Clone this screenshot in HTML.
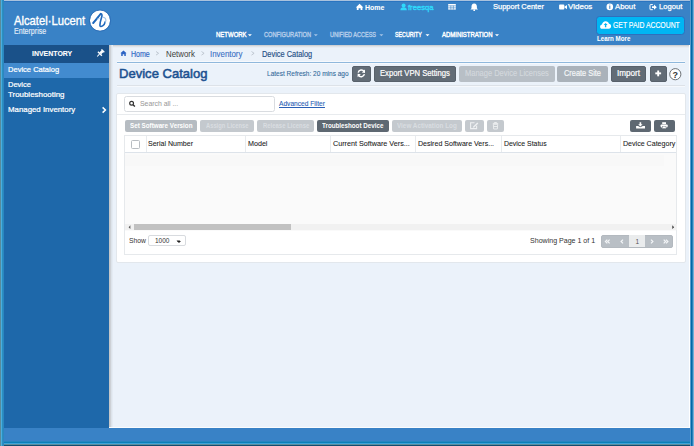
<!DOCTYPE html>
<html><head><meta charset="utf-8">
<style>
*{margin:0;padding:0;box-sizing:border-box}
html,body{width:694px;height:446px;overflow:hidden;background:#3982c6;font-family:"Liberation Sans",sans-serif}
.a{position:absolute}
.t{position:absolute;white-space:nowrap;transform-origin:0 0;font-family:"Liberation Sans",sans-serif}
</style></head><body>
<!-- header -->
<div class="a" style="left:0;top:0;width:694px;height:45px;background:#3982c6"></div>
<!-- sidebar -->
<div class="a" style="left:4px;top:45px;width:105px;height:383px;background:#1e68aa"></div>
<div class="a" style="left:4px;top:45px;width:105px;height:18px;background:#1a5189"></div>
<div class="a" style="left:4px;top:63px;width:105px;height:15px;background:#428bcf"></div>
<!-- content -->
<div class="a" style="left:109px;top:45px;width:581px;height:383px;background:#ebf2fa"></div>
<div class="a" style="left:109px;top:45px;width:581px;height:1px;background:#cfd1d4"></div>
<div class="a" style="left:109px;top:46px;width:581px;height:1px;background:#dfe3e8"></div>
<div class="a" style="left:109px;top:47px;width:581px;height:1px;background:#e7edf4"></div>
<div class="a" style="left:109px;top:45px;width:1px;height:383px;background:#c4c6c8"></div>
<div class="a" style="left:110px;top:45px;width:1px;height:383px;background:#cdd1d6"></div>
<div class="a" style="left:111px;top:45px;width:1px;height:383px;background:#dce3ea"></div>
<div class="a" style="left:112px;top:45px;width:1px;height:383px;background:#e4ebf3"></div>
<div class="a" style="left:109px;top:427px;width:581px;height:1px;background:#fbfcfd"></div>
<div class="a" style="left:109px;top:428px;width:581px;height:1px;background:#1f6cbc"></div>

<!-- footer -->
<div class="a" style="left:0;top:428px;width:694px;height:18px;background:#3982c6"></div>
<!-- frame -->
<div class="a" style="left:0;top:0;width:694px;height:1px;background:#a9c2dd"></div>
<div class="a" style="left:0;top:1px;width:694px;height:1px;background:#2a74c0"></div>
<div class="a" style="left:0;top:441px;width:694px;height:1px;background:#2486c0"></div>
<div class="a" style="left:0;top:442px;width:694px;height:1px;background:#0a7fb8"></div>
<div class="a" style="left:0;top:443px;width:694px;height:1px;background:#3aa3d8"></div>
<div class="a" style="left:0;top:444px;width:694px;height:1px;background:#5b8c9c"></div>
<div class="a" style="left:0;top:445px;width:694px;height:1px;background:#104d70"></div>
<div class="a" style="left:0;top:0;width:1px;height:446px;background:#5a8a9a"></div>
<div class="a" style="left:1px;top:0;width:1px;height:446px;background:#4aaee0"></div>
<div class="a" style="left:2px;top:0;width:1px;height:446px;background:#2a90c0"></div>
<div class="a" style="left:3px;top:0;width:1px;height:446px;background:#2c86c0"></div>
<div class="a" style="left:689px;top:45px;width:1px;height:383px;background:#ffffff"></div>
<div class="a" style="left:690px;top:0;width:1px;height:446px;background:#5a9ccc"></div>
<div class="a" style="left:691px;top:0;width:1px;height:446px;background:#0068a8"></div>
<div class="a" style="left:692px;top:0;width:1px;height:446px;background:#2a80b8"></div>
<div class="a" style="left:693px;top:0;width:1px;height:446px;background:#70b0d8"></div>

<!-- logo circle -->
<div class="a" style="left:89.6px;top:10.3px;width:20.8px;height:20.8px;border-radius:50%;background:#fff"></div>

<!-- GET PAID -->
<div class="a" style="left:595.5px;top:15.5px;width:89px;height:19.5px;border-radius:3.5px;background:#00b5f3;border:1px solid #2e6fbd"></div>

<!-- breadcrumb lines -->
<div class="a" style="left:117px;top:61px;width:568px;height:1px;background:#f6f9fd"></div>
<div class="a" style="left:117px;top:62px;width:568px;height:1px;background:#8fb8dc"></div>
<div class="a" style="left:117px;top:63px;width:568px;height:1px;background:#f6f9fd"></div>
<div class="a" style="left:117px;top:85px;width:568px;height:1px;background:#dde2e8"></div>
<div class="a" style="left:117px;top:86px;width:568px;height:1px;background:#f6f9fd"></div>

<!-- title buttons -->
<div class="a" style="left:352px;top:65.5px;width:19px;height:16.5px;border-radius:2px;background:#626c76;border:1px solid #58616b"></div>
<div class="a" style="left:373.5px;top:65.5px;width:82.5px;height:16.5px;border-radius:2px;background:#626c76;border:1px solid #58616b"></div>
<div class="a" style="left:459px;top:65.5px;width:96px;height:16.5px;border-radius:2px;background:#b8bfc6"></div>
<div class="a" style="left:557px;top:65.5px;width:50.5px;height:16.5px;border-radius:2px;background:#aab2ba"></div>
<div class="a" style="left:611px;top:65.5px;width:35px;height:16.5px;border-radius:2px;background:#626c76;border:1px solid #58616b"></div>
<div class="a" style="left:649.5px;top:65.5px;width:17.5px;height:16.5px;border-radius:2px;background:#626c76;border:1px solid #58616b"></div>

<!-- panel -->
<div class="a" style="left:116px;top:93px;width:570px;height:169.5px;background:#fff;border:1px solid #e2e7ec;border-radius:2px"></div>
<div class="a" style="left:124px;top:96px;width:151px;height:16px;background:#fff;border:1px solid #d9dce0;border-radius:2.5px"></div>
<div class="a" style="left:117px;top:113.5px;width:568px;height:1px;background:#e8ebee"></div>

<!-- toolbar -->
<div class="a" style="left:124.5px;top:120px;width:72.5px;height:11.5px;border-radius:2px;background:#b6bcc2"></div>
<div class="a" style="left:200.2px;top:120px;width:54px;height:11.5px;border-radius:2px;background:#c4c9ce"></div>
<div class="a" style="left:257.3px;top:120px;width:57px;height:11.5px;border-radius:2px;background:#c4c9ce"></div>
<div class="a" style="left:317.3px;top:120px;width:72px;height:11.5px;border-radius:2px;background:#5e6872"></div>
<div class="a" style="left:392px;top:120px;width:70px;height:11.5px;border-radius:2px;background:#c4c9ce"></div>
<div class="a" style="left:465px;top:120px;width:18.5px;height:11.5px;border-radius:2px;background:#c4c9ce"></div>
<div class="a" style="left:487.4px;top:120px;width:16.3px;height:11.5px;border-radius:2px;background:#c4c9ce"></div>
<div class="a" style="left:630px;top:120px;width:21px;height:11.8px;border-radius:2px;background:#5e6872"></div>
<div class="a" style="left:653.8px;top:120px;width:21px;height:11.8px;border-radius:2px;background:#5e6872"></div>

<!-- table -->
<div class="a" style="left:124px;top:135px;width:553px;height:120px;border:1px solid #e6e9ec;background:#fafafa"></div>
<div class="a" style="left:125px;top:136px;width:551px;height:17px;background:#fff;border-bottom:1px solid #dde3ea"></div>
<div class="a" style="left:130.7px;top:140px;width:9.2px;height:8.5px;border:1px solid #b8bdc2;background:#fff;border-radius:1.5px"></div>
<div class="a" style="left:145.5px;top:136px;width:1px;height:16px;background:#e8ebee"></div>
<div class="a" style="left:245.3px;top:136px;width:1px;height:16px;background:#e8ebee"></div>
<div class="a" style="left:330.3px;top:136px;width:1px;height:16px;background:#e8ebee"></div>
<div class="a" style="left:415.3px;top:136px;width:1px;height:16px;background:#e8ebee"></div>
<div class="a" style="left:500.7px;top:136px;width:1px;height:16px;background:#e8ebee"></div>
<div class="a" style="left:619.8px;top:136px;width:1px;height:16px;background:#e8ebee"></div>

<div class="a" style="left:125px;top:231px;width:551px;height:23px;background:#fff"></div>
<div class="a" style="left:125px;top:154.5px;width:539px;height:11.5px;background:#f8f8f8"></div>
<!-- scrollbar -->
<div class="a" style="left:125px;top:223.8px;width:551.5px;height:6.7px;background:#f1f1f1"></div>
<div class="a" style="left:133.5px;top:224.3px;width:157.5px;height:5.8px;background:#c1c1c1"></div>

<!-- show select -->
<div class="a" style="left:148px;top:235.2px;width:37.5px;height:11px;border:1px solid #d8dbdf;border-radius:2px;background:#fff"></div>
<div class="a" style="left:176.5px;top:240.5px;width:0;height:0;border-left:2px solid transparent;border-right:2px solid transparent;border-top:2px solid #222"></div>

<!-- pagination -->
<div class="a" style="left:600.5px;top:234.9px;width:72.6px;height:13px;border-radius:2px;background:#b9bfc5;border:1px solid #b3b9bf"></div>
<div class="a" style="left:628.9px;top:235.4px;width:16.3px;height:12px;background:#eaeced"></div>


<!-- ICONS -->
<svg class="a" style="left:0;top:0" width="694" height="446" viewBox="0 0 694 446">
 <!-- logo glyph -->
 <circle cx="100" cy="20.6" r="10.6" fill="none" stroke="#2b6cb6" stroke-width="0.9"/>
 <path d="M93.2 23.0 C95.5 20.5 98.5 16.5 100.7 13.9" fill="none" stroke="#1f68bc" stroke-width="2.0" stroke-linecap="round"/>
 <path d="M100.8 13.7 C102.4 13.8 102.2 15.5 101.4 18 C100.6 20.5 99.8 23.2 99.9 25.2 C100.0 26.8 101.2 26.8 102.6 25.9 C104 25 104.9 23.4 105.2 21.9" fill="none" stroke="#1f68bc" stroke-width="1.6" stroke-linecap="round"/>
 <path d="M103.4 17.2 C105.6 17.8 106.6 19.8 105.4 22.2" fill="none" stroke="#9cc0e6" stroke-width="1.1" stroke-linecap="round"/>
 <path d="M96.9 19.1 L99.8 18.6" fill="none" stroke="#a8c8ea" stroke-width="0.7"/>
 <!-- top home icon -->
 <path d="M355.8 7.4 L359.6 3.8 L363.4 7.4 L362.4 7.4 L362.4 10 L360.6 10 L360.6 8.3 L358.6 8.3 L358.6 10 L356.8 10 L356.8 7.4 Z" fill="#fff"/>
 <!-- user icon -->
 <circle cx="403.6" cy="5.4" r="2" fill="#2fd9fb"/>
 <path d="M400.4 10.2 C400.4 8 401.6 7.3 403.6 7.3 C405.6 7.3 406.8 8 406.8 10.2 Z" fill="#2fd9fb"/>
 <!-- grid icon -->
 <rect x="448.2" y="4" width="7.6" height="5.6" fill="#fff"/>
 <g fill="#3982c6"><rect x="448.2" y="5.6" width="7.6" height="0.6"/><rect x="448.2" y="7.6" width="7.6" height="0.6"/><rect x="450.6" y="5.6" width="0.6" height="4"/><rect x="452.9" y="5.6" width="0.6" height="4"/></g>
 <!-- bell -->
 <path d="M474.2 3.4 C476.2 3.4 476.9 5 476.9 6.6 L476.9 8.2 L478 9.5 L470.4 9.5 L471.5 8.2 L471.5 6.6 C471.5 5 472.2 3.4 474.2 3.4 Z" fill="#fff"/>
 <circle cx="474.2" cy="10.2" r="0.9" fill="#fff"/>
 <!-- video -->
 <rect x="559.1" y="4.6" width="5.2" height="5" rx="0.8" fill="#fff"/>
 <path d="M564 7.1 L567 5 L567 9.3 Z" fill="#fff"/>
 <!-- info -->
 <circle cx="609.8" cy="6.9" r="3.3" fill="#fff"/>
 <rect x="609.3" y="6" width="1" height="2.9" fill="#3982c6"/><rect x="609.3" y="4.6" width="1" height="0.9" fill="#3982c6"/>
 <!-- logout -->
 <path d="M652.8 4.6 L650.5 4.6 Q650 4.6 650 5.1 L650 9.2 Q650 9.7 650.5 9.7 L652.8 9.7" fill="none" stroke="#fff" stroke-width="1"/>
 <path d="M652 6.2 L654 6.2 L654 4.6 L656.8 7.15 L654 9.7 L654 8.1 L652 8.1 Z" fill="#fff"/>
 <!-- nav carets -->
 <g fill="#fff"><path d="M247.9 34.2 L251.9 34.2 L249.9 36.2 Z"/><path d="M425.5 34.2 L429.5 34.2 L427.5 36.2 Z"/><path d="M495 34.2 L499 34.2 L497 36.2 Z"/></g>
 <g fill="#a4c3e6"><path d="M313.8 34.2 L317.8 34.2 L315.8 36.2 Z"/><path d="M379.4 34.2 L383.4 34.2 L381.4 36.2 Z"/></g>
 <!-- cloud -->
 <path d="M602.2 28.8 C600.6 28.8 600.1 27.6 600.1 26.7 C600.1 25.5 601 24.7 602 24.6 C602.2 22.6 603.8 21.3 605.6 21.3 C607.4 21.3 608.6 22.5 609 23.8 C610.3 23.9 611.1 25.1 611.1 26.3 C611.1 27.7 610.2 28.8 608.8 28.8 Z" fill="#fff"/>
 <path d="M605.6 22.9 L607.6 25 L606.3 25 L606.3 27.3 L604.9 27.3 L604.9 25 L603.6 25 Z" fill="#00b5f3"/>
 <!-- pin -->
 <g transform="translate(100.4 53.3) rotate(45)" fill="#fff">
  <rect x="-2" y="-4.2" width="4" height="1.3"/>
  <rect x="-1.3" y="-3.2" width="2.6" height="3.4"/>
  <rect x="-2.8" y="0" width="5.6" height="1.4"/>
  <rect x="-0.5" y="1.3" width="1" height="3.2"/>
 </g>
 <!-- chevron -->
 <path d="M102.6 107.4 L105.4 110 L102.6 112.6" fill="none" stroke="#fff" stroke-width="1.5"/>
 <!-- breadcrumb home -->
 <path d="M120.4 53.3 L123.5 50.4 L126.6 53.3 L125.8 53.3 L125.8 56 L124.3 56 L124.3 54.3 L122.7 54.3 L122.7 56 L121.2 56 L121.2 53.3 Z" fill="#2c64c4"/>
 <!-- breadcrumb separators -->
 <g fill="none" stroke="#b4bcc6" stroke-width="0.8"><path d="M156 51.5 L158.6 53.3 L156 55.1"/><path d="M201.5 51.5 L204.1 53.3 L201.5 55.1"/><path d="M251.5 51.5 L254.1 53.3 L251.5 55.1"/></g>
 <!-- refresh -->
 <g fill="none" stroke="#fff" stroke-width="1.5">
  <path d="M358.2 72.6 A3.3 3.3 0 0 1 364.2 71.6"/>
  <path d="M364.4 74.2 A3.3 3.3 0 0 1 358.4 75.2"/>
 </g>
 <path d="M365 69.6 L365 73 L361.8 72.6 Z" fill="#fff"/>
 <path d="M357.6 77.2 L357.6 73.8 L360.8 74.2 Z" fill="#fff"/>
 <!-- plus -->
 <rect x="655.3" y="72.4" width="5.8" height="1.9" fill="#fff"/><rect x="657.25" y="70.5" width="1.9" height="5.8" fill="#fff"/>
 <!-- help -->
 <circle cx="675.3" cy="74.2" r="5.6" fill="#fff" stroke="#6b7075" stroke-width="1"/>
 <text x="675.3" y="77.6" text-anchor="middle" font-family="Liberation Sans" font-weight="bold" font-size="9" fill="#333">?</text>
 <!-- search icon -->
 <circle cx="131.6" cy="103.3" r="1.9" fill="none" stroke="#333" stroke-width="1.2"/>
 <path d="M133 104.7 L134.9 106.5" stroke="#333" stroke-width="1.4"/>
 <!-- edit icon -->
 <path d="M474.5 122.8 L470.6 122.8 L470.6 128.6 L476.6 128.6 L476.6 125.8" fill="none" stroke="#eef0f2" stroke-width="1.1"/>
 <path d="M477.3 122.4 L478.3 123.4 L474.2 127.5 L472.8 127.8 L473.1 126.4 Z" fill="#eef0f2"/>
 <!-- trash icon -->
 <path d="M492.8 123.4 L498.2 123.4 M494.5 123.4 L494.5 122.5 L496.5 122.5 L496.5 123.4" fill="none" stroke="#eef0f2" stroke-width="0.9"/>
 <path d="M493.3 124.3 L497.7 124.3 L497.3 129 L493.7 129 Z" fill="none" stroke="#eef0f2" stroke-width="0.9"/>
 <path d="M493.6 126.5 L497.4 126.5" stroke="#eef0f2" stroke-width="0.9"/>
 <!-- download -->
 <path d="M639.6 122.2 L641.2 122.2 L641.2 124.2 L642.6 124.2 L640.4 126.4 L638.2 124.2 L639.6 124.2 Z" fill="#fff"/>
 <path d="M636.1 126.1 L638 126.1 L640.4 127.2 L642.8 126.1 L645 126.1 L645 128.6 L636.1 128.6 Z" fill="#fff"/>
 <!-- print -->
 <rect x="662.2" y="122.2" width="3.8" height="2" fill="#fff"/>
 <rect x="660.6" y="124.4" width="7.1" height="3" rx="0.8" fill="#fff"/>
 <rect x="662.2" y="126.6" width="3.8" height="2" fill="#fff" stroke="#5e6872" stroke-width="0.4"/>
 <!-- scrollbar arrows -->
 <path d="M130.4 225.3 L128.6 227.2 L130.4 229.1 Z" fill="#555"/>
 <path d="M672.3 225.3 L674.1 227.2 L672.3 229.1 Z" fill="#333"/>
 <!-- select caret -->
 <path d="M176.5 240.4 L180.2 240.4 L178.35 242.3 Z" fill="#222"/>
 <!-- pagination arrows -->
 <g fill="none" stroke="#f4f6f8" stroke-width="1.2">
  <path d="M607.3 239.6 L605.4 241.5 L607.3 243.4 M609.6 239.6 L607.7 241.5 L609.6 243.4"/>
  <path d="M623 239.6 L621.1 241.5 L623 243.4"/>
  <path d="M651 239.6 L652.9 241.5 L651 243.4"/>
  <path d="M663.7 239.6 L665.6 241.5 L663.7 243.4 M666 239.6 L667.9 241.5 L666 243.4"/>
 </g>
</svg>

<div class="t" style="left:14.30px;top:14.50px;font-size:12.17px;line-height:12.17px;color:#ffffff;transform:scaleX(0.9233);-webkit-text-stroke:0.35px #ffffff;">Alcatel·Lucent</div>
<div class="t" style="left:14.30px;top:27.30px;font-size:8.30px;line-height:8.30px;color:#e3edf8;transform:scaleX(0.8508);-webkit-text-stroke:0.15px #e3edf8;">Enterprise</div>
<div class="t" style="left:365.00px;top:3.50px;font-size:8.00px;line-height:8.00px;color:#ffffff;transform:scaleX(0.8693);font-weight:bold;-webkit-text-stroke:0.1px #ffffff;">Home</div>
<div class="t" style="left:407.60px;top:3.50px;font-size:8.12px;line-height:8.12px;color:#2fd9fb;transform:scaleX(0.9405);-webkit-text-stroke:0.4px #2fd9fb;">freesqa</div>
<div class="t" style="left:492.60px;top:3.00px;font-size:7.97px;line-height:7.97px;color:#ffffff;transform:scaleX(0.9414);-webkit-text-stroke:0.25px #ffffff;">Support Center</div>
<div class="t" style="left:567.60px;top:3.00px;font-size:7.97px;line-height:7.97px;color:#ffffff;transform:scaleX(1.0067);-webkit-text-stroke:0.25px #ffffff;">Videos</div>
<div class="t" style="left:614.70px;top:3.00px;font-size:7.97px;line-height:7.97px;color:#ffffff;transform:scaleX(0.9764);-webkit-text-stroke:0.25px #ffffff;">About</div>
<div class="t" style="left:659.00px;top:3.00px;font-size:7.97px;line-height:7.97px;color:#ffffff;transform:scaleX(0.9539);-webkit-text-stroke:0.25px #ffffff;">Logout</div>
<div class="t" style="left:215.80px;top:30.80px;font-size:7.00px;line-height:7.00px;color:#ffffff;transform:scaleX(0.8558);-webkit-text-stroke:0.4px #ffffff;">NETWORK</div>
<div class="t" style="left:263.80px;top:30.80px;font-size:7.00px;line-height:7.00px;color:#b2cbe9;transform:scaleX(0.8083);-webkit-text-stroke:0.4px #b2cbe9;">CONFIGURATION</div>
<div class="t" style="left:329.90px;top:30.80px;font-size:7.00px;line-height:7.00px;color:#b2cbe9;transform:scaleX(0.7890);-webkit-text-stroke:0.4px #b2cbe9;">UNIFIED ACCESS</div>
<div class="t" style="left:395.40px;top:30.80px;font-size:7.00px;line-height:7.00px;color:#ffffff;transform:scaleX(0.7558);-webkit-text-stroke:0.4px #ffffff;">SECURITY</div>
<div class="t" style="left:441.50px;top:30.80px;font-size:7.00px;line-height:7.00px;color:#ffffff;transform:scaleX(0.8514);-webkit-text-stroke:0.4px #ffffff;">ADMINISTRATION</div>
<div class="t" style="left:612.80px;top:20.70px;font-size:8.40px;line-height:8.40px;color:#ffffff;transform:scaleX(0.8186);-webkit-text-stroke:0.15px #ffffff;">GET PAID ACCOUNT</div>
<div class="t" style="left:596.70px;top:36.20px;font-size:6.86px;line-height:6.86px;color:#ffffff;transform:scaleX(0.9034);font-weight:bold;-webkit-text-stroke:0.05px #ffffff;">Learn More</div>
<div class="t" style="left:32.40px;top:50.30px;font-size:8.00px;line-height:8.00px;color:#ffffff;transform:scaleX(0.8700);font-weight:bold;-webkit-text-stroke:0.1px #ffffff;">INVENTORY</div>
<div class="t" style="left:8.00px;top:66.10px;font-size:8.00px;line-height:8.00px;color:#ffffff;transform:scaleX(0.9424);-webkit-text-stroke:0.22px #ffffff;">Device Catalog</div>
<div class="t" style="left:8.00px;top:81.00px;font-size:8.00px;line-height:8.00px;color:#ffffff;transform:scaleX(0.9359);-webkit-text-stroke:0.22px #ffffff;">Device</div>
<div class="t" style="left:8.00px;top:90.90px;font-size:8.00px;line-height:8.00px;color:#ffffff;transform:scaleX(0.9890);-webkit-text-stroke:0.22px #ffffff;">Troubleshooting</div>
<div class="t" style="left:8.00px;top:106.10px;font-size:8.00px;line-height:8.00px;color:#ffffff;transform:scaleX(0.9812);-webkit-text-stroke:0.22px #ffffff;">Managed Inventory</div>
<div class="t" style="left:130.70px;top:50.60px;font-size:8.20px;line-height:8.20px;color:#2c64c4;transform:scaleX(0.8570);-webkit-text-stroke:0.15px #2c64c4;">Home</div>
<div class="t" style="left:165.50px;top:50.60px;font-size:8.20px;line-height:8.20px;color:#3d3d3d;transform:scaleX(0.9601);">Network</div>
<div class="t" style="left:210.30px;top:50.60px;font-size:8.20px;line-height:8.20px;color:#3a6fc4;transform:scaleX(0.9629);-webkit-text-stroke:0.1px #3a6fc4;">Inventory</div>
<div class="t" style="left:261.70px;top:50.60px;font-size:8.20px;line-height:8.20px;color:#1f4f86;transform:scaleX(0.9041);-webkit-text-stroke:0.15px #1f4f86;">Device Catalog</div>
<div class="t" style="left:118.79px;top:66.90px;font-size:13.62px;line-height:13.62px;color:#1c5190;transform:scaleX(0.9590);-webkit-text-stroke:0.55px #1c5190;">Device Catalog</div>
<div class="t" style="left:267.30px;top:70.40px;font-size:7.54px;line-height:7.54px;color:#336b9a;transform:scaleX(0.8666);-webkit-text-stroke:0.1px #336b9a;">Latest Refresh: 20 mins ago</div>
<div class="t" style="left:380.10px;top:69.00px;font-size:8.55px;line-height:8.55px;color:#ffffff;transform:scaleX(0.8978);-webkit-text-stroke:0.2px #ffffff;">Export VPN Settings</div>
<div class="t" style="left:464.50px;top:69.00px;font-size:8.55px;line-height:8.55px;color:#d3d8dd;transform:scaleX(0.8780);-webkit-text-stroke:0.15px #d3d8dd;">Manage Device Licenses</div>
<div class="t" style="left:564.00px;top:69.00px;font-size:8.30px;line-height:8.30px;color:#f4f6f8;transform:scaleX(0.8904);-webkit-text-stroke:0.2px #f4f6f8;">Create Site</div>
<div class="t" style="left:616.90px;top:69.00px;font-size:8.30px;line-height:8.30px;color:#ffffff;transform:scaleX(0.9790);-webkit-text-stroke:0.2px #ffffff;">Import</div>
<div class="t" style="left:140.00px;top:99.70px;font-size:7.97px;line-height:7.97px;color:#9a9a9a;transform:scaleX(0.8621);-webkit-text-stroke:0.05px #9a9a9a;">Search all ...</div>
<div class="t" style="left:279.10px;top:100.00px;font-size:7.54px;line-height:7.54px;color:#2a5fb5;transform:scaleX(0.8783);-webkit-text-stroke:0.1px #2a5fb5;text-decoration:underline;">Advanced Filter</div>
<div class="t" style="left:130.10px;top:122.80px;font-size:7.14px;line-height:7.14px;color:#ffffff;transform:scaleX(0.8820);font-weight:bold;">Set Software Version</div>
<div class="t" style="left:206.20px;top:122.80px;font-size:7.14px;line-height:7.14px;color:#d9dde1;transform:scaleX(0.8125);font-weight:bold;">Assign License</div>
<div class="t" style="left:262.70px;top:122.80px;font-size:7.14px;line-height:7.14px;color:#d9dde1;transform:scaleX(0.8344);font-weight:bold;">Release License</div>
<div class="t" style="left:322.10px;top:122.80px;font-size:7.14px;line-height:7.14px;color:#ffffff;transform:scaleX(0.8757);font-weight:bold;">Troubleshoot Device</div>
<div class="t" style="left:397.30px;top:122.80px;font-size:7.14px;line-height:7.14px;color:#d9dde1;transform:scaleX(0.8882);font-weight:bold;">View Activation Log</div>
<div class="t" style="left:147.80px;top:140.30px;font-size:7.80px;line-height:7.80px;color:#222222;transform:scaleX(0.9038);-webkit-text-stroke:0.08px #222222;">Serial Number</div>
<div class="t" style="left:248.00px;top:140.30px;font-size:7.80px;line-height:7.80px;color:#222222;transform:scaleX(0.9161);-webkit-text-stroke:0.08px #222222;">Model</div>
<div class="t" style="left:332.90px;top:140.30px;font-size:7.80px;line-height:7.80px;color:#222222;transform:scaleX(0.9225);-webkit-text-stroke:0.08px #222222;">Current Software Vers...</div>
<div class="t" style="left:418.00px;top:140.30px;font-size:7.80px;line-height:7.80px;color:#222222;transform:scaleX(0.9046);-webkit-text-stroke:0.08px #222222;">Desired Software Vers...</div>
<div class="t" style="left:503.60px;top:140.30px;font-size:7.80px;line-height:7.80px;color:#222222;transform:scaleX(0.8858);-webkit-text-stroke:0.08px #222222;">Device Status</div>
<div class="t" style="left:623.00px;top:140.30px;font-size:7.80px;line-height:7.80px;color:#222222;transform:scaleX(0.9076);-webkit-text-stroke:0.08px #222222;">Device Category</div>
<div class="t" style="left:128.50px;top:236.90px;font-size:7.80px;line-height:7.80px;color:#333333;transform:scaleX(0.8655);">Show</div>
<div class="t" style="left:155.30px;top:238.30px;font-size:6.81px;line-height:6.81px;color:#333333;transform:scaleX(0.9517);">1000</div>
<div class="t" style="left:529.90px;top:237.40px;font-size:7.80px;line-height:7.80px;color:#333333;transform:scaleX(0.9048);">Showing Page 1 of 1</div>
<div class="t" style="left:635.50px;top:238.50px;font-size:6.52px;line-height:6.52px;color:#555555;">1</div>
</body></html>
